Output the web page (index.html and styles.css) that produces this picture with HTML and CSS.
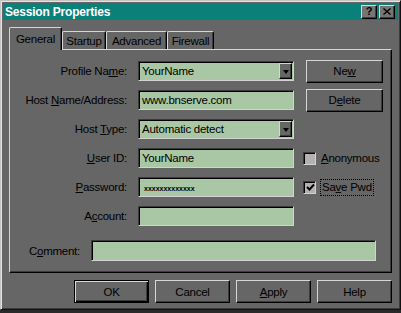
FILE: index.html
```html
<!DOCTYPE html>
<html>
<head>
<meta charset="utf-8">
<link rel="stylesheet" href="styles.css">
</head>
<body>
<div class="window">
  <div class="titlebar">
    <span class="title">Session Properties</span>
    <div class="tb-btns">
      <span class="tb-btn q">?</span>
      <span class="tb-btn"><svg width="8" height="7" viewBox="0 0 8 7"><path d="M0.5 0.5 L7.5 6.5 M7.5 0.5 L0.5 6.5" stroke="#000" stroke-width="1.4" fill="none"/></svg></span>
    </div>
  </div>
  <div class="tabs">
    <div class="tab active t-gen">General</div>
    <div class="tab t-start">Startup</div>
    <div class="tab t-adv">Advanced</div>
    <div class="tab t-fw">Firewall</div>
  </div>
  <div class="panel">
    <div class="form">
      <div class="row">
        <span class="lbl">Profile Na<u>m</u>e:</span>
        <div class="field combo"><span class="val">YourName</span><span class="arrow"><i class="tri"></i></span></div>
        <span class="btn side-btn">Ne<u>w</u></span>
      </div>
      <div class="row">
        <span class="lbl">Host <u>N</u>ame/Address:</span>
        <div class="field"><span class="val">www.bnserve.com</span></div>
        <span class="btn side-btn">D<u>e</u>lete</span>
      </div>
      <div class="row">
        <span class="lbl">Host <u>T</u>ype:</span>
        <div class="field combo"><span class="val">Automatic detect</span><span class="arrow"><i class="tri"></i></span></div>
      </div>
      <div class="row">
        <span class="lbl"><u>U</u>ser ID:</span>
        <div class="field"><span class="val">YourName</span></div>
        <span class="check"><span class="box"></span><span class="clabel"><u>A</u>nonymous</span></span>
      </div>
      <div class="row">
        <span class="lbl"><u>P</u>assword:</span>
        <div class="field"><span class="val pw">xxxxxxxxxxxxx</span></div>
        <span class="check"><span class="box"><svg width="9" height="9" viewBox="0 0 9 9"><path d="M1 4 L3.5 6.5 L8 1.5" stroke="#000" stroke-width="2" fill="none"/></svg></span><span class="clabel focus">Sa<u>v</u>e Pwd</span></span>
      </div>
      <div class="row">
        <span class="lbl">A<u>c</u>count:</span>
        <div class="field"><span class="val"></span></div>
      </div>
      <div class="row comment-row">
        <span class="lbl lbl-short">C<u>o</u>mment:</span>
        <div class="field wide"><span class="val"></span></div>
      </div>
    </div>
  </div>
  <div class="buttons">
    <span class="btn bottom-btn default">OK</span>
    <span class="btn bottom-btn">Cancel</span>
    <span class="btn bottom-btn"><u>A</u>pply</span>
    <span class="btn bottom-btn">Help</span>
  </div>
</div>
</body>
</html>
```
FILE: styles.css
```css
html, body {
  margin: 0;
  padding: 0;
  background: #2a2a2a;
}
body {
  width: 401px;
  height: 313px;
  overflow: hidden;
  font-family: "Liberation Sans", Arial, sans-serif;
  font-size: 11.5px;
  letter-spacing: -0.25px;
  color: #000;
}
u {
  text-decoration: underline;
  text-underline-offset: 1px;
}
.window {
  box-sizing: border-box;
  width: 401px;
  height: 310px;
  background: #666666;
  border: 1px solid;
  border-color: #c4c4c4 #111 #111 #c4c4c4;
  box-shadow: inset 1px 1px #e4e4e4, inset -1px -1px #3c3c3c;
  padding: 1px;
  display: flex;
  flex-direction: column;
}
.titlebar {
  margin: 1px 1px 0 1px;
  height: 17px;
  background: #0b8079;
  display: flex;
  align-items: center;
  padding: 0 3px 0 2px;
}
.title {
  font-weight: bold;
  font-size: 12px;
  color: #fff;
  letter-spacing: -0.2px;
}
.tb-btns {
  margin-left: auto;
  display: flex;
  gap: 2px;
}
.tb-btn {
  box-sizing: border-box;
  width: 16px;
  height: 14px;
  background: #757575;
  border: 1px solid;
  border-color: #d6d6d6 #000 #000 #d6d6d6;
  box-shadow: inset -1px -1px #3c3c3c;
  display: flex;
  align-items: center;
  justify-content: center;
  font-weight: bold;
  font-size: 11px;
  letter-spacing: 0;
  line-height: 1;
}
.tabs {
  margin: 7px 0 0 7px;
  height: 22px;
  display: flex;
  align-items: flex-end;
}
.tab {
  box-sizing: border-box;
  height: 18px;
  border-top: 1px solid #d6d6d6;
  border-left: 1px solid #d6d6d6;
  border-right: 1px solid #000;
  border-radius: 2px 2px 0 0;
  box-shadow: inset -1px 0 #3c3c3c;
  display: flex;
  align-items: center;
  justify-content: center;
  padding-top: 1px;
}
.tab.active {
  height: 23px;
  margin-bottom: -1px;
  position: relative;
  z-index: 1;
  background: #666666;
  padding-top: 0;
  padding-bottom: 1px;
}
.t-gen { width: 53px; }
.t-start { width: 44px; }
.t-adv { width: 61px; }
.t-fw { width: 47px; }
.panel {
  box-sizing: border-box;
  margin-left: 7px;
  width: 383px;
  height: 224px;
  border: 1px solid;
  border-color: #d6d6d6 #000 #000 #d6d6d6;
  box-shadow: inset -1px -1px #3c3c3c;
  padding-top: 11px;
}
.form {
  display: flex;
  flex-direction: column;
  gap: 9px;
}
.row {
  height: 20px;
  display: flex;
  align-items: center;
}
.lbl {
  width: 117px;
  flex-shrink: 0;
  text-align: right;
  margin-right: 11px;
  white-space: nowrap;
}
.lbl-short {
  width: 70px;
}
.field {
  box-sizing: border-box;
  width: 156px;
  height: 20px;
  flex-shrink: 0;
  background: #a9c7a5;
  border: 1px solid;
  border-color: #3a3a3a #d2d2d2 #d2d2d2 #3a3a3a;
  box-shadow: inset 1px 1px #000;
  padding: 1px 1px 1px 2px;
  display: flex;
  align-items: center;
}
.val {
  flex: 1;
  padding-left: 1px;
  white-space: nowrap;
  overflow: hidden;
}
.pw {
  font-size: 7px;
  font-weight: bold;
  letter-spacing: 0;
  padding-left: 3px;
  padding-top: 2px;
}
.arrow {
  box-sizing: border-box;
  width: 13px;
  height: 16px;
  background: #666666;
  border: 1px solid;
  border-color: #d6d6d6 #000 #000 #d6d6d6;
  box-shadow: inset -1px -1px #3c3c3c;
  display: flex;
  align-items: center;
  justify-content: center;
}
.tri {
  width: 0;
  height: 0;
  border-left: 3.5px solid transparent;
  border-right: 3.5px solid transparent;
  border-top: 4px solid #000;
  margin-top: 1px;
}
.comment-row {
  margin-top: 5px;
  height: 21px;
}
.field.wide {
  width: 285px;
  height: 21px;
}
.btn {
  box-sizing: border-box;
  height: 23px;
  flex-shrink: 0;
  border: 1px solid;
  border-color: #d6d6d6 #000 #000 #d6d6d6;
  box-shadow: inset -1px -1px #3c3c3c;
  display: flex;
  align-items: center;
  justify-content: center;
  background: #666666;
}
.side-btn {
  width: 77px;
  margin-left: 12px;
}
.check {
  margin-left: 9px;
  display: flex;
  align-items: center;
}
.box {
  box-sizing: border-box;
  width: 13px;
  height: 13px;
  background: #b4b0b4;
  border: 1px solid;
  border-color: #3a3a3a #d2d2d2 #d2d2d2 #3a3a3a;
  box-shadow: inset 1px 1px #000;
  display: flex;
  align-items: center;
  justify-content: center;
  padding: 1px 0 0 1px;
}
.clabel {
  margin-left: 5px;
  white-space: nowrap;
}
.clabel.focus {
  margin-left: 4px;
  padding: 1px 1px 2px 1px;
  border: 1px dotted #000;
}
.buttons {
  margin-top: 7px;
  display: flex;
  justify-content: flex-end;
  gap: 6px;
  padding-right: 7px;
}
.bottom-btn {
  width: 75px;
}
.bottom-btn.default {
  border-color: #000;
  box-shadow: inset 1px 1px #d6d6d6, inset -1px -1px #000, inset -2px -2px #3c3c3c;
}
```
